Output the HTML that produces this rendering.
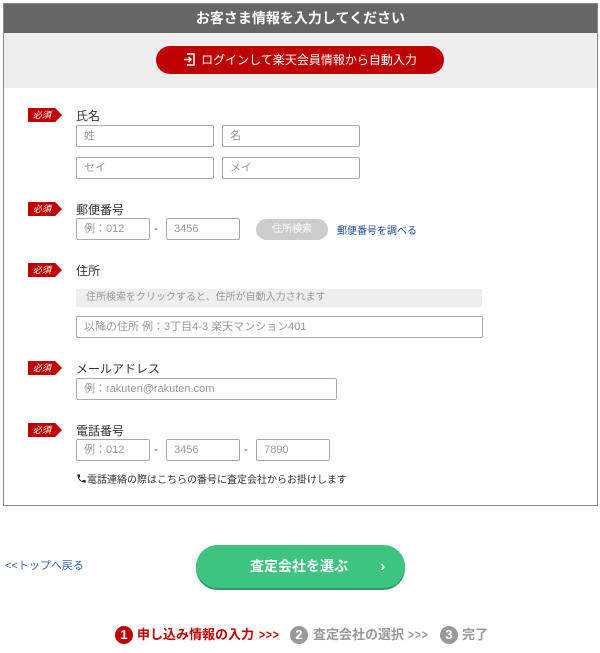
<!DOCTYPE html>
<html><head><meta charset="utf-8"><style>
*{margin:0;padding:0;box-sizing:border-box}
body{width:600px;height:653px;background:#fff;font-family:"Liberation Sans","Noto Sans CJK JP",sans-serif;position:relative;overflow:hidden;color:#333}
.a{position:absolute}
.box{left:3px;top:3px;width:595px;height:503px;border:1px solid #888}
.hdr{left:4px;top:4px;width:593px;height:29px;background:#666;color:#fff;font-weight:bold;font-size:14px;text-align:center;line-height:29px}
.gray{left:4px;top:33px;width:593px;height:55px;background:#eee}
.login{left:156px;top:46px;width:288px;height:28px;background:#bf0000;border-radius:14px;color:#fff;font-size:12px;line-height:28px;text-align:center}
.bd{width:34px;height:14px;background:#bf0000;color:#fff;font-size:9px;line-height:14px;padding-left:5px;font-style:italic;clip-path:polygon(0 0,80% 0,100% 50%,80% 100%,0 100%)}
.lb{font-size:12px;color:#333}
.in{border:1px solid #aaa;border-radius:2px;height:22px;font-size:11px;color:#999;line-height:20px;padding-left:7px;background:#fff}
.dash{font-size:12px;color:#555}
.st{position:absolute;top:626px;font-size:13px;font-weight:bold;line-height:18px;white-space:nowrap}
.c{position:absolute;top:626px;width:18px;height:18px;border-radius:50%;color:#fff;text-align:center;font-size:13px;font-weight:bold;line-height:18px}
</style></head><body>
<div class="a box"></div>
<div class="a hdr">お客さま情報を入力してください</div>
<div class="a gray"></div>
<div class="a login"><svg width="12" height="13" viewBox="0 0 12 13" style="vertical-align:-2px;margin-right:6px"><path d="M4 1H11V12H4" fill="none" stroke="#fff" stroke-width="1.5"/><path d="M1 6.5H8M5.5 4L8 6.5L5.5 9" fill="none" stroke="#fff" stroke-width="1.5"/></svg>ログインして楽天会員情報から自動入力</div>

<div class="a bd" style="left:28px;top:108px">必須</div>
<div class="a lb" style="left:76px;top:107px">氏名</div>
<div class="a in" style="left:76px;top:125px;width:138px">姓</div>
<div class="a in" style="left:222px;top:125px;width:138px">名</div>
<div class="a in" style="left:76px;top:157px;width:138px">セイ</div>
<div class="a in" style="left:222px;top:157px;width:138px">メイ</div>

<div class="a bd" style="left:28px;top:202px">必須</div>
<div class="a lb" style="left:76px;top:201px">郵便番号</div>
<div class="a in" style="left:76px;top:218px;width:74px">例：012</div>
<div class="a dash" style="left:154px;top:221px">-</div>
<div class="a in" style="left:166px;top:218px;width:74px">3456</div>
<div class="a" style="left:256px;top:219px;width:72px;height:21px;background:#ccc;border-radius:11px;color:#fff;font-size:10px;line-height:21px;text-align:center">住所検索</div>
<div class="a" style="left:337px;top:222px;font-size:10px;color:#1a4a9c">郵便番号を調べる</div>

<div class="a bd" style="left:28px;top:263px">必須</div>
<div class="a lb" style="left:76px;top:262px">住所</div>
<div class="a" style="left:76px;top:289px;width:406px;height:18px;background:#eee;font-size:10px;color:#999;line-height:18px;padding-left:10px">住所検索をクリックすると、住所が自動入力されます</div>
<div class="a in" style="left:76px;top:316px;width:407px">以降の住所 例：3丁目4-3 楽天マンション401</div>

<div class="a bd" style="left:28px;top:361px">必須</div>
<div class="a lb" style="left:76px;top:360px">メールアドレス</div>
<div class="a in" style="left:76px;top:378px;width:261px">例：rakuten@rakuten.com</div>

<div class="a bd" style="left:28px;top:423px">必須</div>
<div class="a lb" style="left:76px;top:422px">電話番号</div>
<div class="a in" style="left:76px;top:439px;width:74px">例：012</div>
<div class="a dash" style="left:154px;top:442px">-</div>
<div class="a in" style="left:166px;top:439px;width:74px">3456</div>
<div class="a dash" style="left:244px;top:442px">-</div>
<div class="a in" style="left:256px;top:439px;width:74px">7890</div>
<div class="a" style="left:76px;top:471px;font-size:10px;color:#333"><svg width="11" height="11" viewBox="0 0 24 24" style="vertical-align:-1px"><path d="M6.6 10.8c1.4 2.8 3.8 5.1 6.6 6.6l2.2-2.2c.3-.3.7-.4 1-.2 1.1.4 2.3.6 3.6.6.6 0 1 .4 1 1V20c0 .6-.4 1-1 1C10.6 21 3 13.4 3 4c0-.6.4-1 1-1h3.5c.6 0 1 .4 1 1 0 1.2.2 2.4.6 3.6.1.3 0 .7-.2 1z" fill="#222"/></svg>電話連絡の際はこちらの番号に査定会社からお掛けします</div>

<div class="a" style="left:5px;top:557px;font-size:11px;color:#3a6ab0">&lt;&lt;トップへ戻る</div>
<div class="a" style="left:196px;top:545px;width:209px;height:43px;background:#3fc380;border-radius:22px;box-shadow:0 2px 0 #2f9a63;color:#fff;font-weight:bold;font-size:14px;line-height:43px"><span style="position:absolute;left:54px">査定会社を選ぶ</span><span style="position:absolute;left:184px;font-size:16px">&#x203A;</span></div>

<div class="c" style="left:115px;background:#bf0000">1</div>
<div class="st" style="left:137px;color:#bf0000">申し込み情報の入力</div>
<div class="st" style="left:259px;color:#bf0000;letter-spacing:1px;transform:scaleX(.8);transform-origin:left">&gt;&gt;&gt;</div>
<div class="c" style="left:290px;background:#999">2</div>
<div class="st" style="left:313px;color:#999">査定会社の選択</div>
<div class="st" style="left:408px;color:#999;letter-spacing:1px;transform:scaleX(.8);transform-origin:left">&gt;&gt;&gt;</div>
<div class="c" style="left:440px;background:#999">3</div>
<div class="st" style="left:462px;color:#999">完了</div>
</body></html>
